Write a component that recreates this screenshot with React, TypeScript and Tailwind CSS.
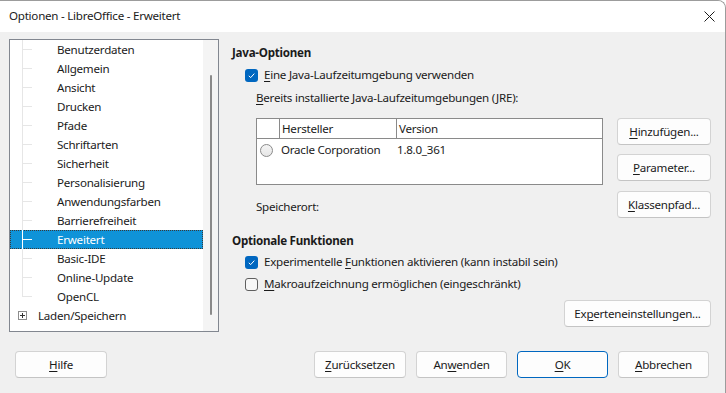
import React from "react"

const FONT = { fontFamily: '"Segoe UI", "Noto Sans", "Open Sans", sans-serif' }

const treeItems = [
  "Benutzerdaten",
  "Allgemein",
  "Ansicht",
  "Drucken",
  "Pfade",
  "Schriftarten",
  "Sicherheit",
  "Personalisierung",
  "Anwendungsfarben",
  "Barrierefreiheit",
  "Erweitert",
  "Basic-IDE",
  "Online-Update",
  "OpenCL",
]

function U({ children }: { children: React.ReactNode }) {
  return <span className="underline underline-offset-2 decoration-1">{children}</span>
}

function Button({
  children,
  className = "",
  primary = false,
}: {
  children: React.ReactNode
  className?: string
  primary?: boolean
}) {
  return (
    <div
      className={
        "h-[27px] flex items-center justify-center rounded-[4px] bg-[#fdfdfd] text-[#1b1b1b] border " +
        (primary ? "border-[#0067c0]" : "border-[#d3d3d3] border-b-[#c4c4c4]") +
        " " +
        className
      }
    >
      {children}
    </div>
  )
}

function Checkbox({ checked }: { checked: boolean }) {
  if (checked) {
    return (
      <div className="w-[13px] h-[13px] rounded-[3px] bg-[#0067c0] flex items-center justify-center shrink-0">
        <svg width="9" height="9" viewBox="0 0 9 9">
          <path d="M1.8 4.8 L3.7 6.6 L7.3 2.6" fill="none" stroke="#fff" strokeWidth="1" />
        </svg>
      </div>
    )
  }
  return <div className="w-[13px] h-[13px] rounded-[3px] border border-[#5f5f5f] bg-[#f7f7f7] shrink-0" />
}

function Tree() {
  return (
    <div className="w-[210px] h-[293px] border border-[#828790] bg-white flex shrink-0">
      <div className="flex-1 relative">
        {/* vertical tree line */}
        <div className="absolute left-[12px] top-0 h-[257px] w-px bg-[#e6e6e6]" />
        {treeItems.map((t) => {
          const sel = t === "Erweitert"
          return (
            <div
              key={t}
              className={
                "relative h-[19px] flex items-center pl-[47px] " +
                (sel ? "bg-[#0f93d8] text-white outline outline-1 outline-dotted outline-[#3a3a3a] -outline-offset-1" : "text-[#1b1b1b]")
              }
            >
              <div className={"absolute left-[12px] top-[9px] w-[10px] h-px " + (sel ? "bg-white" : "bg-[#e6e6e6]")} />
              {sel && <div className="absolute left-[12px] top-0 h-[19px] w-px bg-white" />}
              {t}
            </div>
          )
        })}
        <div className="h-[19px] flex items-center pl-[8px] text-[#1b1b1b]">
          <div className="w-[9px] h-[9px] border border-[#8d8d8d] flex items-center justify-center mr-[11px]">
            <svg width="7" height="7" viewBox="0 0 7 7">
              <path d="M1 3.5 H6 M3.5 1 V6" stroke="#333" strokeWidth="1" />
            </svg>
          </div>
          Laden/Speichern
        </div>
      </div>
      <div className="w-[15px] bg-[#f4f4f4] flex justify-center">
        <div className="w-[2px] mt-[35px] h-[240px] rounded-full bg-[#8a8a8a]" />
      </div>
    </div>
  )
}

export default function App() {
  return (
    <div
      className="w-[726px] h-[393px] flex flex-col bg-[#f0f0f0] border-t border-r border-[#9c9c9c] rounded-tr-[8px] overflow-hidden text-[11.6px] tracking-[-0.25px] text-[#1b1b1b]"
      style={FONT}
    >
      {/* title bar */}
      <div className="h-[31px] bg-white flex items-center justify-between pl-[9px] pr-[9px] shrink-0">
        <span className="-mt-[1px]">Optionen - LibreOffice - Erweitert</span>
        <svg width="11" height="11" viewBox="0 0 11 11" className="mr-[1px] -mt-[1px]">
          <path d="M0.5 0.5 L10.5 10.5 M10.5 0.5 L0.5 10.5" stroke="#1b1b1b" strokeWidth="1" />
        </svg>
      </div>

      <div className="flex pl-[9px] pt-[7px] pr-[16px]">
        <Tree />

        <div className="flex-1 flex flex-col ml-[13px]">
          <div className="h-[20px] mt-[4px] flex items-center font-bold">Java-Optionen</div>
          <div className="h-[20px] mt-[2px] flex items-center ml-[13px] gap-[6px]">
            <Checkbox checked />
            <span>
              <U>E</U>ine Java-Laufzeitumgebung verwenden
            </span>
          </div>
          <div className="h-[20px] mt-[3px] flex items-center ml-[24px]">
            <span>
              <U>B</U>ereits installierte Java-Laufzeitumgebungen (JRE):
            </span>
          </div>

          <div className="flex mt-[10px] ml-[24px]">
            <div className="flex flex-col">
              <div className="w-[347px] h-[67px] border border-[#8a8a8a] bg-white flex flex-col">
                <div className="h-[20px] flex border-b border-[#8a8a8a]">
                  <div className="w-[23px] border-r border-[#8a8a8a]" />
                  <div className="w-[117px] border-r border-[#8a8a8a] flex items-center pl-[2px]">Hersteller</div>
                  <div className="flex-1 flex items-center pl-[2px]">Version</div>
                </div>
                <div className="h-[22px] flex items-center">
                  <div className="w-[13px] h-[13px] ml-[3px] rounded-full border border-[#8a8a8a] bg-gradient-to-b from-[#f4f4f4] to-[#e6e6e6]" />
                  <span className="ml-[8px] w-[116px]">Oracle Corporation</span>
                  <span>1.8.0_361</span>
                </div>
              </div>
              <div className="h-[20px] mt-[12px] flex items-center">Speicherort:</div>
            </div>
            <div className="flex flex-col ml-[14px] gap-[9px]">
              <Button className="w-[94px]">
                <span>
                  <U>H</U>inzufügen...
                </span>
              </Button>
              <Button className="w-[94px]">
                <span>
                  <U>P</U>arameter...
                </span>
              </Button>
              <Button className="w-[94px] mt-[1px]">
                <span>
                  <U>K</U>lassenpfad...
                </span>
              </Button>
            </div>
          </div>

          <div className="h-[20px] mt-[13px] flex items-center font-bold">Optionale Funktionen</div>
          <div className="h-[20px] mt-[1px] flex items-center ml-[13px] gap-[6px]">
            <Checkbox checked />
            <span>
              Experimentelle <U>F</U>unktionen aktivieren (kann instabil sein)
            </span>
          </div>
          <div className="h-[20px] mt-[2px] flex items-center ml-[13px] gap-[6px]">
            <Checkbox checked={false} />
            <span>
              <U>M</U>akroaufzeichnung ermöglichen (eingeschränkt)
            </span>
          </div>
          <div className="flex justify-end mt-[6px]">
            <Button className="w-[147px]">
              <span>
                Ex<U>p</U>erteneinstellungen...
              </span>
            </Button>
          </div>
        </div>
      </div>

      <div className="flex items-center mt-[19px] pl-[15px] pr-[16px]">
        <Button className="w-[92px]">
          <span>
            <U>H</U>ilfe
          </span>
        </Button>
        <div className="flex-1" />
        <div className="flex gap-[10px]">
          <Button className="w-[92px]">
            <span>
              <U>Z</U>urücksetzen
            </span>
          </Button>
          <Button className="w-[91px]">
            <span>
              An<U>w</U>enden
            </span>
          </Button>
          <Button className="w-[91px]" primary>
            <span>
              <U>O</U>K
            </span>
          </Button>
          <Button className="w-[91px]">
            <span>
              <U>A</U>bbrechen
            </span>
          </Button>
        </div>
      </div>
    </div>
  )
}
